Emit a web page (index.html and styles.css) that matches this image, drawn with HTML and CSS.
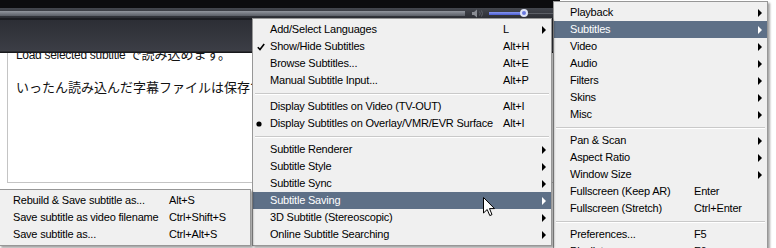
FILE: index.html
```html
<!DOCTYPE html>
<html>
<head>
  <title>Subtitles menu</title>
  <link rel="stylesheet" href="styles.css">
</head>
<body>
  <div class="screen">

    <div class="player">
      <div class="topbar">
        <div class="seek_row">
          <div class="seek"></div>
          <div class="volume">
            <svg class="speaker" width="14" height="9" viewBox="0 0 14 9">
              <path d="M0 3 H2 L5 0.5 V8.5 L2 6 H0 Z" fill="#8a8d94"/>
              <path d="M7.5 2.5 Q9 4.5 7.5 6.5 M9.5 1.5 Q11.5 4.5 9.5 7.5" stroke="#5d6068" stroke-width="1" fill="none"/>
            </svg>
            <div class="vol_track">
              <div class="vol_fill"></div>
              <div class="vol_knob"></div>
            </div>
          </div>
        </div>
        <div class="gap_line"></div>
        <div class="panel"></div>
        <div class="panel_edge"></div>
      </div>

      <div class="doc">
        <p><span class="latin">Load selected subtitle</span> で読み込めます。</p>
        <p>いったん読み込んだ字幕ファイルは保存できます。</p>
      </div>
    </div>

    <!-- context menu, level 1 -->
    <div class="menu main_menu">
      <div class="item"><span class="mark"></span><span class="label">Playback</span><span class="key"></span><span class="arrow"></span></div>
      <div class="item active"><span class="mark"></span><span class="label">Subtitles</span><span class="key"></span><span class="arrow"></span></div>
      <div class="item"><span class="mark"></span><span class="label">Video</span><span class="key"></span><span class="arrow"></span></div>
      <div class="item"><span class="mark"></span><span class="label">Audio</span><span class="key"></span><span class="arrow"></span></div>
      <div class="item"><span class="mark"></span><span class="label">Filters</span><span class="key"></span><span class="arrow"></span></div>
      <div class="item"><span class="mark"></span><span class="label">Skins</span><span class="key"></span><span class="arrow"></span></div>
      <div class="item"><span class="mark"></span><span class="label">Misc</span><span class="key"></span><span class="arrow"></span></div>
      <div class="sep"></div>
      <div class="item"><span class="mark"></span><span class="label">Pan &amp; Scan</span><span class="key"></span><span class="arrow"></span></div>
      <div class="item"><span class="mark"></span><span class="label">Aspect Ratio</span><span class="key"></span><span class="arrow"></span></div>
      <div class="item"><span class="mark"></span><span class="label">Window Size</span><span class="key"></span><span class="arrow"></span></div>
      <div class="item"><span class="mark"></span><span class="label">Fullscreen (Keep AR)</span><span class="key">Enter</span></div>
      <div class="item"><span class="mark"></span><span class="label">Fullscreen (Stretch)</span><span class="key">Ctrl+Enter</span></div>
      <div class="sep"></div>
      <div class="item"><span class="mark"></span><span class="label">Preferences...</span><span class="key">F5</span></div>
      <div class="item"><span class="mark"></span><span class="label">Playlist...</span><span class="key">F6</span></div>
    </div>

    <!-- level 2: Subtitles -->
    <div class="menu sub_menu">
      <div class="item"><span class="mark"></span><span class="label">Add/Select Languages</span><span class="key">L</span><span class="arrow"></span></div>
      <div class="item">
        <span class="mark"><svg width="8" height="8" viewBox="0 0 8 8"><path d="M0.8 4.2 L3 6.6 L7.2 1" stroke="#000" stroke-width="1.6" fill="none"/></svg></span>
        <span class="label">Show/Hide Subtitles</span><span class="key">Alt+H</span>
      </div>
      <div class="item"><span class="mark"></span><span class="label">Browse Subtitles...</span><span class="key">Alt+E</span></div>
      <div class="item"><span class="mark"></span><span class="label">Manual Subtitle Input...</span><span class="key">Alt+P</span></div>
      <div class="sep"></div>
      <div class="item"><span class="mark"></span><span class="label">Display Subtitles on Video (TV-OUT)</span><span class="key">Alt+I</span></div>
      <div class="item">
        <span class="mark bullet"><svg width="6" height="6" viewBox="0 0 6 6"><circle cx="3" cy="3" r="2.6" fill="#000"/></svg></span>
        <span class="label">Display Subtitles on Overlay/VMR/EVR Surface</span><span class="key">Alt+I</span>
      </div>
      <div class="sep"></div>
      <div class="item"><span class="mark"></span><span class="label">Subtitle Renderer</span><span class="key"></span><span class="arrow"></span></div>
      <div class="item"><span class="mark"></span><span class="label">Subtitle Style</span><span class="key"></span><span class="arrow"></span></div>
      <div class="item"><span class="mark"></span><span class="label">Subtitle Sync</span><span class="key"></span><span class="arrow"></span></div>
      <div class="item active"><span class="mark"></span><span class="label">Subtitle Saving</span><span class="key"></span><span class="arrow"></span></div>
      <div class="item"><span class="mark"></span><span class="label">3D Subtitle (Stereoscopic)</span><span class="key"></span><span class="arrow"></span></div>
      <div class="item"><span class="mark"></span><span class="label">Online Subtitle Searching</span><span class="key"></span><span class="arrow"></span></div>
    </div>

    <!-- level 3: Subtitle Saving -->
    <div class="menu save_menu">
      <div class="item"><span class="mark"></span><span class="label">Rebuild &amp; Save subtitle as...</span><span class="key">Alt+S</span></div>
      <div class="item"><span class="mark"></span><span class="label">Save subtitle as video filename</span><span class="key">Ctrl+Shift+S</span></div>
      <div class="item"><span class="mark"></span><span class="label">Save subtitle as...</span><span class="key">Ctrl+Alt+S</span></div>
    </div>

    <svg class="cursor" width="13" height="20" viewBox="0 0 13 20">
      <path d="M0.5 0.5 V16 L4.2 12.5 L6.8 18.6 L9 17.6 L6.5 11.6 H11.5 Z" fill="#fff" stroke="#000" stroke-width="1"/>
    </svg>
  </div>
</body>
</html>
```

FILE: styles.css
```css
* {
  box-sizing: border-box;
}

body {
  margin: 0;
  background: #ffffff;
}

.screen {
  position: relative;
  width: 776px;
  height: 248px;
  overflow: hidden;
  background: #ffffff;
}

/* player window behind the menus */
.player {
  width: 560px;
}

.topbar {
  background: #0c0c0e;
  padding-top: 8px;
}

.seek_row {
  display: flex;
  align-items: center;
  height: 10px;
  background: linear-gradient(#44474e, #2c2e34);
}

.seek {
  width: 465px;
  height: 5px;
  background: linear-gradient(#92969e, #5a5e66);
}

.volume {
  display: flex;
  align-items: center;
  flex: 1;
  padding-left: 7px;
}

.speaker {
  display: block;
}

.vol_track {
  flex: 1;
  height: 1px;
  background: #5c5f66;
  margin-left: 3px;
  display: flex;
  align-items: center;
}

.vol_fill {
  width: 33px;
  height: 3px;
  background: linear-gradient(#8898f0, #4a5cd0);
}

.vol_knob {
  width: 8px;
  height: 8px;
  margin-left: -2px;
  border-radius: 50%;
  background: #6a7ae0;
  border: 2px solid #dfe3f5;
}

.gap_line {
  height: 2px;
  background: #1c1d22;
}

.panel {
  height: 30px;
  background: linear-gradient(#2c2e35, #3b3d45);
}

.panel_edge {
  height: 3px;
  background: linear-gradient(#4a4c53, #0e0e10);
}

.doc {
  height: 130px;
  margin-left: 7px;
  padding-left: 8px;
  border-left: 1px solid #c4c4c4;
  border-bottom: 1px solid #c4c4c4;
  overflow: hidden;
  font-family: "Noto Sans CJK JP", "Liberation Sans", sans-serif;
  font-size: 13px;
  line-height: 20px;
  color: #111111;
  white-space: nowrap;
}

.doc p {
  width: 236px;
  overflow: hidden;
  margin: 12px 0 0;
}

.doc p:first-child {
  margin-top: -11px;
  padding-top: 2px;
}

.latin {
  font-family: "Liberation Sans", Arial, sans-serif;
  font-size: 12px;
  letter-spacing: -0.3px;
}

/* menus */
.menu {
  position: absolute;
  background: #f0f0f0;
  border: 1px solid #979797;
  padding: 2px 0;
  box-shadow: 2px 2px 2px rgba(0, 0, 0, 0.35);
  font-family: "Liberation Sans", Arial, sans-serif;
  font-size: 11px;
  letter-spacing: -0.2px;
  color: #000000;
}

.item {
  display: flex;
  align-items: center;
  height: 17px;
  line-height: 17px;
  white-space: nowrap;
}

.item.active {
  background: #5e7087;
  color: #ffffff;
}

.mark {
  display: flex;
  align-items: center;
  height: 17px;
}

.mark svg {
  display: block;
}

.key {
  flex: 1;
}

.arrow {
  width: 0;
  height: 0;
  border-left: 4px solid #000;
  border-top: 4px solid transparent;
  border-bottom: 4px solid transparent;
  margin-right: 5px;
}

.item.active .arrow {
  border-left-color: #ffffff;
}

.sep {
  height: 9px;
  padding-top: 4px;
}

.sep:before {
  content: "";
  display: block;
  height: 1px;
  margin: 0 2px;
  background: #c9c9c9;
  border-bottom: 1px solid #ffffff;
  box-sizing: content-box;
}

.main_menu {
  left: 553px;
  top: 1px;
  width: 215px;
}
.main_menu .mark { width: 16px; }
.main_menu .label { width: 124px; }

.sub_menu {
  left: 252px;
  top: 18px;
  width: 300px;
  z-index: 1;
}
.sub_menu .mark { width: 17px; padding-left: 4px; }
.sub_menu .mark.bullet { padding-left: 3px; }
.sub_menu .label { width: 233px; }

.save_menu {
  left: -1px;
  top: 189px;
  width: 252px;
  z-index: 2;
}
.save_menu .mark { width: 13px; }
.save_menu .label { width: 156px; }

.cursor {
  position: absolute;
  left: 483px;
  top: 197px;
  z-index: 3;
}
```
